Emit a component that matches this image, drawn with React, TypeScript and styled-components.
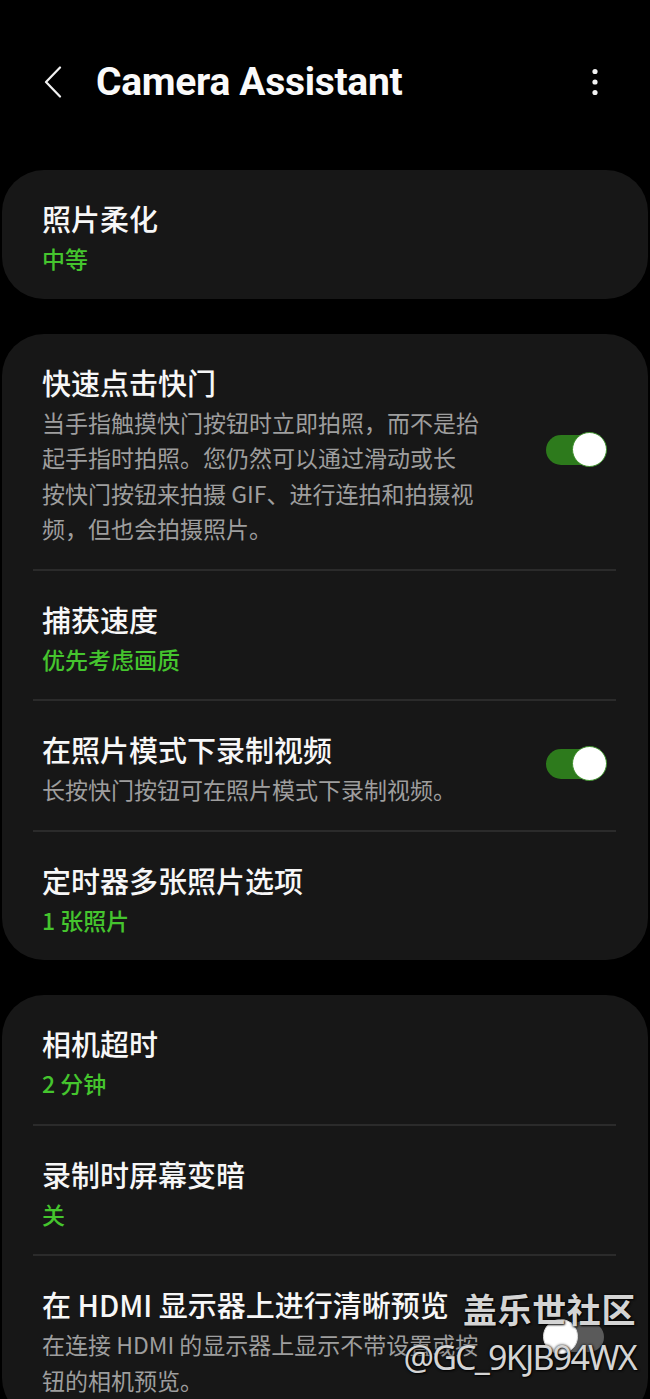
import React from "react";
import styled, { createGlobalStyle } from "styled-components";

const Global = createGlobalStyle`
  html, body { margin: 0; padding: 0; background: #000; }
  body { font-family: Roboto, "Noto Sans CJK SC", sans-serif; }
`;

const Page = styled.div`
  position: relative;
  width: 650px;
  height: 1399px;
  overflow: hidden;
  background: #000;
`;

const Header = styled.header`
  display: flex;
  align-items: center;
  height: 64px;
  padding: 50px 0 0 0;
  margin-bottom: 56px;
`;

const BackBtn = styled.div`
  width: 96px;
  display: flex;
  justify-content: flex-start;
  padding-left: 44px;
  box-sizing: border-box;
`;

const Title = styled.h1`
  flex: 1;
  margin: 0;
  font-family: Roboto, sans-serif;
  font-weight: 700;
  font-size: 39px;
  letter-spacing: -0.3px;
  color: #fafafa;
`;

const MoreBtn = styled.div`
  width: 110px;
  display: flex;
  justify-content: center;
`;

const Card = styled.section`
  margin: 0 2px 35px 2px;
  background: #171717;
  border-radius: 42px;
  display: flex;
  flex-direction: column;
`;

const Row = styled.div`
  display: flex;
  align-items: center;
  padding: 29px 44px 22px 40px;
`;

const Texts = styled.div`
  flex: 1;
  display: flex;
  flex-direction: column;
`;

const RowTitle = styled.div`
  font-family: "Noto Sans CJK SC", sans-serif;
  font-weight: 500;
  font-size: 29px;
  line-height: 38px;
  color: #f7f7f7;
`;

const Sub = styled.div<{ $green?: boolean }>`
  margin-top: 4px;
  font-family: "Noto Sans CJK SC", sans-serif;
  font-weight: ${(p) => (p.$green ? 500 : 400)};
  font-size: 23px;
  line-height: 35.5px;
  color: ${(p) => (p.$green ? "#45c52e" : "#9e9e9e")};
`;

const Divider = styled.div`
  height: 2px;
  margin: 0 32px 0 31px;
  background: #2b2b2b;
`;

const Track = styled.div<{ $on: boolean }>`
  position: relative;
  width: 58px;
  height: 30px;
  border-radius: 15px;
  background: ${(p) => (p.$on ? "#2d7a1c" : "#5a5a5a")};
  margin: -10px 0 0 20px;
  flex-shrink: 0;
`;

const Thumb = styled.div<{ $on: boolean }>`
  position: absolute;
  top: -3px;
  ${(p) => (p.$on ? "right: -3px;" : "left: -3px;")}
  width: 35px;
  height: 35px;
  border-radius: 50%;
  background: #fff;
  box-sizing: border-box;
  border: 1.5px solid ${(p) => (p.$on ? "#3c8f2a" : "#dcdcdc")};
`;

const Watermark = styled.div`
  position: absolute;
  right: 14px;
  top: 1287px;
  display: flex;
  flex-direction: column;
  align-items: flex-end;
  color: #d4d4d4;
  text-shadow: 0 0 3px rgba(0, 0, 0, 0.9), 1px 1px 2px rgba(0, 0, 0, 0.8);
  pointer-events: none;
`;

const WmTop = styled.div`
  font-family: "Noto Sans CJK SC", sans-serif;
  font-weight: 700;
  font-size: 34px;
  line-height: 44px;
  letter-spacing: 0.6px;
`;

const WmBottom = styled.div`
  font-family: "Noto Sans", sans-serif;
  font-weight: 400;
  font-size: 34px;
  line-height: 44px;
  letter-spacing: -1.8px;
  margin-top: 4px;
`;

const Toggle = ({ on }: { on: boolean }) => (
  <Track $on={on}>
    <Thumb $on={on} />
  </Track>
);

type Item = { title: string; sub?: string[]; green?: string; toggle?: boolean };

const Lines = ({ lines }: { lines: string[] }) => (
  <Sub>
    {lines.map((l, i) => (
      <React.Fragment key={i}>
        {i > 0 && <br />}
        {l}
      </React.Fragment>
    ))}
  </Sub>
);

const Group = ({ items }: { items: Item[] }) => (
  <Card>
    {items.map((it, i) => (
      <React.Fragment key={i}>
        {i > 0 && <Divider />}
        <Row>
          <Texts>
            <RowTitle>{it.title}</RowTitle>
            {it.green && <Sub $green>{it.green}</Sub>}
            {it.sub && <Lines lines={it.sub} />}
          </Texts>
          {it.toggle !== undefined && <Toggle on={it.toggle} />}
        </Row>
      </React.Fragment>
    ))}
  </Card>
);

export default function App() {
  return (
    <Page>
      <Global />
      <Header>
        <BackBtn>
          <svg width="18" height="32" viewBox="0 0 18 32">
            <path d="M16 1.5 L2 16 L16 30.5" fill="none" stroke="#f2f2f2" strokeWidth="2.2" strokeLinecap="round" strokeLinejoin="round" />
          </svg>
        </BackBtn>
        <Title>Camera Assistant</Title>
        <MoreBtn>
          <svg width="8" height="28" viewBox="0 0 8 28">
            <circle cx="4" cy="3.5" r="2.6" fill="#f2f2f2" />
            <circle cx="4" cy="14" r="2.6" fill="#f2f2f2" />
            <circle cx="4" cy="24.5" r="2.6" fill="#f2f2f2" />
          </svg>
        </MoreBtn>
      </Header>

      <Group items={[{ title: "照片柔化", green: "中等" }]} />

      <Group
        items={[
          {
            title: "快速点击快门",
            sub: [
              "当手指触摸快门按钮时立即拍照，而不是抬",
              "起手指时拍照。您仍然可以通过滑动或长",
              "按快门按钮来拍摄 GIF、进行连拍和拍摄视",
              "频，但也会拍摄照片。",
            ],
            toggle: true,
          },
          { title: "捕获速度", green: "优先考虑画质" },
          { title: "在照片模式下录制视频", sub: ["长按快门按钮可在照片模式下录制视频。"], toggle: true },
          { title: "定时器多张照片选项", green: "1 张照片" },
        ]}
      />

      <Group
        items={[
          { title: "相机超时", green: "2 分钟" },
          { title: "录制时屏幕变暗", green: "关" },
          {
            title: "在 HDMI 显示器上进行清晰预览",
            sub: ["在连接 HDMI 的显示器上显示不带设置或按", "钮的相机预览。"],
            toggle: false,
          },
        ]}
      />

      <Watermark>
        <WmTop>盖乐世社区</WmTop>
        <WmBottom>@GC_9KJB94WX</WmBottom>
      </Watermark>
    </Page>
  );
}
